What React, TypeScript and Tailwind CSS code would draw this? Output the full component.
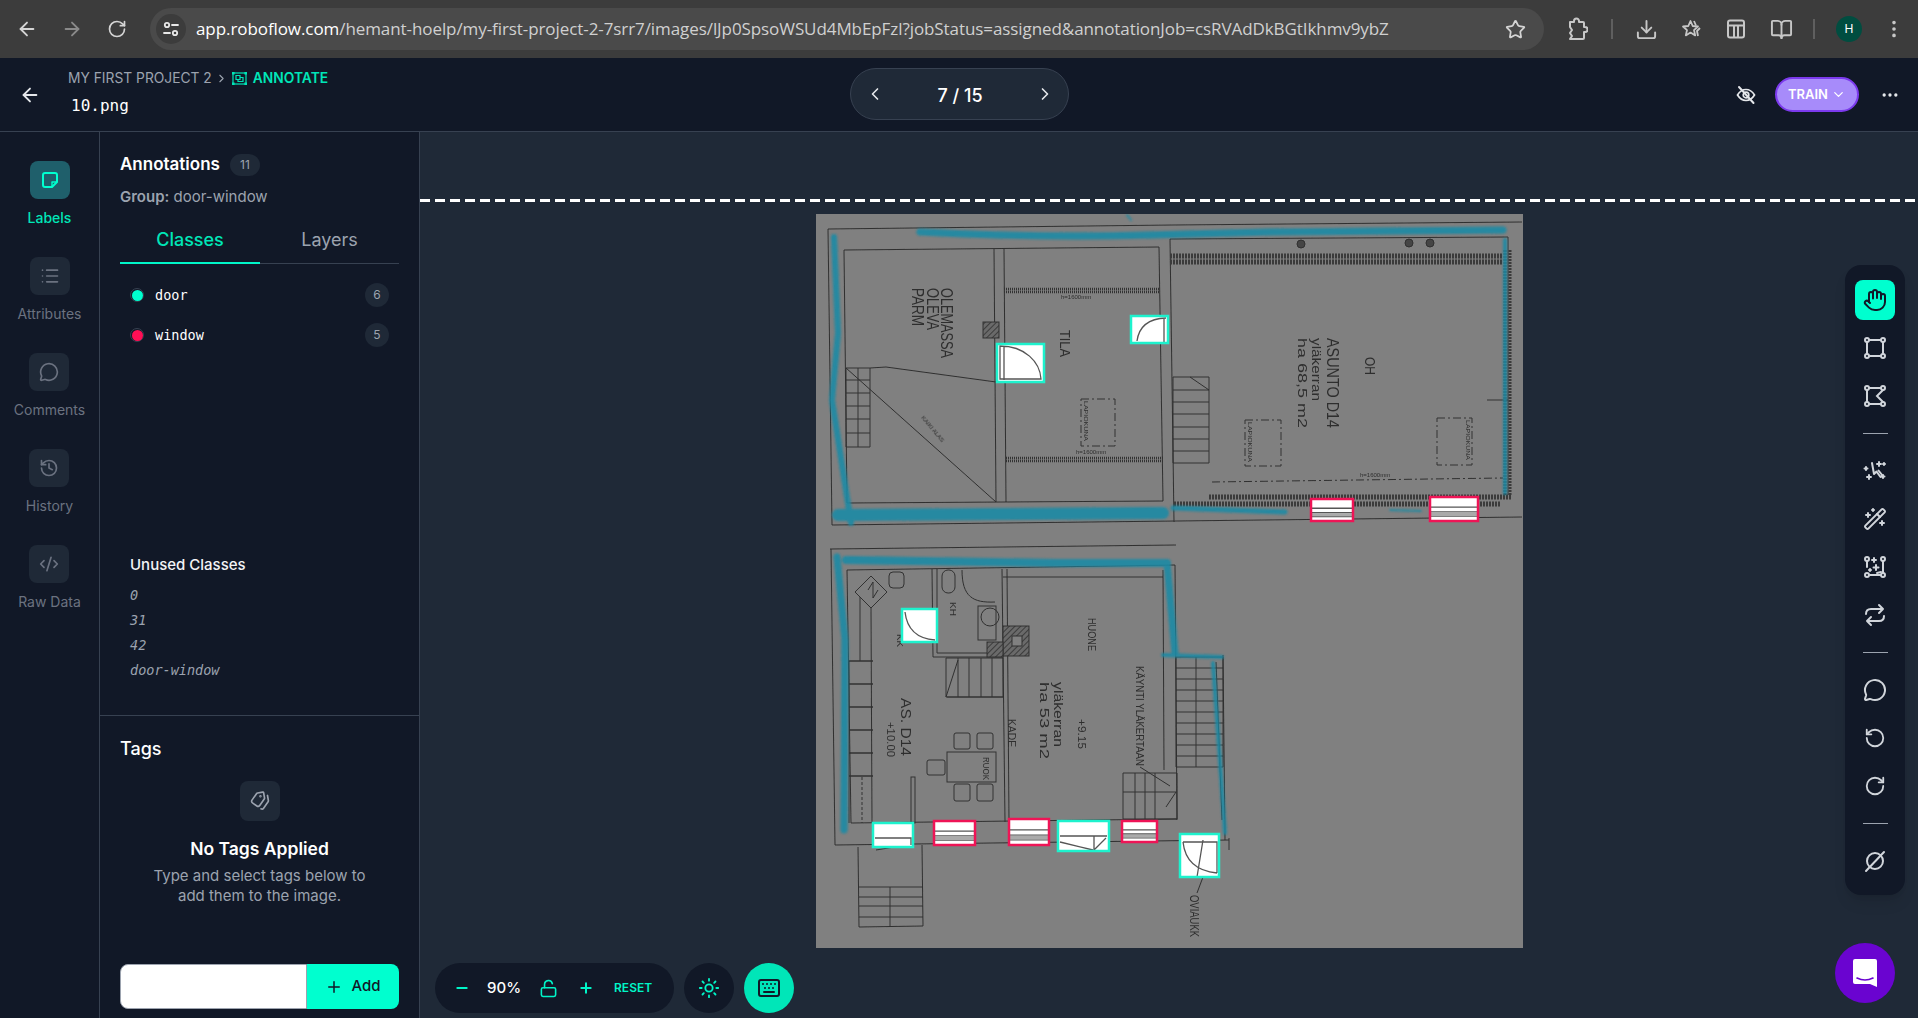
import {
  ArrowLeft,
  ArrowRight,
  BookOpen,
  ChevronDown,
  ChevronLeft,
  ChevronRight,
  CodeXml,
  Download,
  Ellipsis,
  EllipsisVertical,
  Hand,
  History,
  Keyboard,
  List,
  LockOpen,
  MessageCircle,
  Minus,
  Plus,
  RotateCcw,
  RotateCw,
  Star,
  Sun,
  Tags,
  WandSparkles,
} from "lucide-react"
import type { ReactNode } from "react"

const url = "/hemant-hoelp/my-first-project-2-7srr7/images/lJp0SpsoWSUd4MbEpFzl?jobStatus=assigned&annotationJob=csRVAdDkBGtIkhmv9ybZ"

function NoteIcon() {
  return (
    <svg width="20" height="20" viewBox="0 0 20 20" fill="none" stroke="currentColor" strokeWidth="2" strokeLinejoin="round">
      <path d="M5 3h10a2 2 0 0 1 2 2v7l-5 5H5a2 2 0 0 1-2-2V5a2 2 0 0 1 2-2z" />
      <path d="M17 12h-5v5" strokeWidth="1.400" />
    </svg>
  )
}

const navItems = [
  { label: "Labels", icon: <NoteIcon />, active: true },
  { label: "Attributes", icon: <List size={20} /> },
  { label: "Comments", icon: <MessageCircle size={20} /> },
  { label: "History", icon: <History size={20} /> },
  { label: "Raw Data", icon: <CodeXml size={20} /> },
]

const classes = [
  { name: "door", count: 6, dot: "bg-[#00ffcf]" },
  { name: "window", count: 5, dot: "bg-[#ff0f55]" },
]

const unused = ["0", "31", "42", "door-window"]

function Corners({ notch }: { notch?: boolean }) {
  return (
    <svg width="24" height="24" viewBox="0 0 24 24" fill="none" stroke="currentColor" strokeWidth="2" strokeLinecap="round">
      <circle cx="4" cy="4" r="2" />
      <circle cx="20" cy="4" r="2" />
      <circle cx="4" cy="20" r="2" />
      <circle cx="20" cy="20" r="2" />
      <path d="M6 4h12M4 6v12M6 20h12" />
      {notch ? <path d="M20 6l-6 6 6 6" /> : <path d="M20 6v12" />}
    </svg>
  )
}

function SmartSelect() {
  return (
    <svg width="24" height="24" viewBox="0 0 24 24" fill="none" stroke="currentColor" strokeWidth="2" strokeLinecap="round" strokeLinejoin="round">
      <path d="M9 4l2 11 2.500-2.500 4 5.500 2-1.500-4-5" />
      <path d="M16 3v4M14 5h4M21 4v2M20 5h2M3 8v3M1.500 9.500h3M6 16v4M4 18h4M20 16v3M18.500 17.500h3" />
    </svg>
  )
}

function AutoLabel() {
  return (
    <svg width="24" height="24" viewBox="0 0 24 24" fill="none" stroke="currentColor" strokeWidth="2" strokeLinecap="round">
      <circle cx="4" cy="4" r="2" />
      <circle cx="20" cy="4" r="2" />
      <circle cx="4" cy="20" r="2" />
      <circle cx="20" cy="20" r="2" />
      <path d="M4 6v6M20 6v12M7 20h11M14 18l4-1" />
      <path d="M11 3v4M9 5h4M13 10v5M10.500 12.500h5M7 14v2M6 15h2" />
    </svg>
  )
}

function SwapIcon() {
  return (
    <svg width="24" height="24" viewBox="0 0 24 24" fill="none" stroke="currentColor" strokeWidth="2" strokeLinecap="round" strokeLinejoin="round">
      <path d="M3 11c0-3 2-5 5-5h12M16 2l4 4-4 4" />
      <path d="M21 13c0 3-2 5-5 5H4M8 14l-4 4 4 4" />
    </svg>
  )
}

function NullIcon() {
  return (
    <svg width="24" height="24" viewBox="0 0 24 24" fill="none" stroke="currentColor" strokeWidth="2" strokeLinecap="round">
      <circle cx="12" cy="12" r="8" />
      <path d="M3 22L21 3" />
    </svg>
  )
}

function SiteInfo() {
  return (
    <svg width="18" height="18" viewBox="0 0 18 18" fill="none" stroke="#e8e8e8" strokeWidth="1.800" strokeLinecap="round">
      <circle cx="5" cy="5" r="2.200" />
      <path d="M10 5h6M2 13h6" />
      <circle cx="13" cy="13" r="2.200" />
    </svg>
  )
}

function ExtensionIcon() {
  return (
    <svg width="22" height="24" viewBox="0 0 22 24" fill="none" stroke="#c7c7c7" strokeWidth="2" strokeLinejoin="round">
      <path d="M4 5h4V4a2.500 2.500 0 0 1 5 0v1h4a1 1 0 0 1 1 1v4h1a2.500 2.500 0 0 1 0 5h-1v6a1 1 0 0 1-1 1H4l2-3-2-3 2-3-2-3z" />
    </svg>
  )
}

function StarBadge() {
  return (
    <svg width="22" height="22" viewBox="0 0 22 22" fill="none" stroke="#c7c7c7" strokeWidth="1.800" strokeLinejoin="round">
      <path d="M9.500 3l2.200 5 5.300.5-4 3.600 1.200 5.300-4.700-2.800-4.700 2.800 1.200-5.300-4-3.600 5.300-.5z" />
      <path d="M13 3l2 4.500M19 10l-3 3 1 5" />
    </svg>
  )
}

function LayoutBox() {
  return (
    <svg width="20" height="22" viewBox="0 0 20 22" fill="none" stroke="#c7c7c7" strokeWidth="2">
      <rect x="2" y="2.500" width="16" height="17" rx="2" />
      <path d="M2 7.500h16M8 7.500v12M12 7.500v12" />
    </svg>
  )
}

function AnnotateIcon() {
  return (
    <svg width="15" height="13" viewBox="0 0 15 13" fill="none" stroke="#00e6b8" strokeWidth="1.200">
      <rect x="1" y="1" width="13" height="11" />
      <path d="M4 3.500h4v4H4zM8 5.500h3v4H6V7.500" />
      <path d="M0 0h2v2H0zM13 0h2v2h-2zM0 11h2v2H0zM13 11h2v2h-2z" fill="#00e6b8" />
    </svg>
  )
}

function HiddenEye() {
  return (
    <svg width="20" height="20" viewBox="0 0 20 20" fill="none" stroke="#e5e7eb" strokeWidth="1.700" strokeLinecap="round">
      <path d="M1.500 10C4 6 7 4.500 10 4.500S16 6 18.500 10C16 14 13 15.500 10 15.500S4 14 1.500 10z" />
      <circle cx="10" cy="10" r="2.800" />
      <path d="M3 2l14.500 16" strokeWidth="2" />
    </svg>
  )
}

function ChatBubble() {
  return (
    <svg width="26" height="30" viewBox="0 0 26 30">
      <path d="M3 1h20a2 2 0 0 1 2 2v26l-7-3H3a2 2 0 0 1-2-2V3a2 2 0 0 1 2-2z" fill="#fff" />
      <path d="M5 20q8 4 16 0" fill="none" stroke="#6a04d0" strokeWidth="1.600" strokeLinecap="round" />
    </svg>
  )
}

function ToolDivider() {
  return (
    <div className="h-[27px] flex items-center justify-center">
      <div className="w-[25px] h-px bg-[#9ca3af]" />
    </div>
  )
}

function Tool({ children, active }: { children: ReactNode; active?: boolean }) {
  return (
    <div className="h-12 flex items-center justify-center">
      <div className={`size-10 rounded-lg flex items-center justify-center ${active ? "bg-[#00ffcf] text-[#111827]" : "text-[#d1d5db]"}`}>
        {children}
      </div>
    </div>
  )
}

// stripes of a window symbol, used for the pink boxes
function WindowBox({ x, y, w, h }: { x: number; y: number; w: number; h: number }) {
  return (
    <g>
      <rect x={x} y={y} width={w} height={h} fill="#fff" />
      <path
        d={`M${x} ${y + h * 0.42}H${x + w}M${x} ${y + h * 0.62}H${x + w}M${x} ${y + h * 0.8}H${x + w}`}
        stroke="#555"
        strokeWidth="1.300"
      />
      <rect x={x} y={y + h * 0.64} width={w} height={h * 0.15} fill="#aaa" />
      <rect x={x} y={y} width={w} height={h} fill="none" stroke="#ee1456" strokeWidth="2.500" />
    </g>
  )
}

function DoorBox({ x, y, w, h, d }: { x: number; y: number; w: number; h: number; d: string }) {
  return (
    <g>
      <rect x={x} y={y} width={w} height={h} fill="#fff" />
      <path d={d} fill="none" stroke="#555" strokeWidth="1.300" />
      <rect x={x} y={y} width={w} height={h} fill="none" stroke="#1df2cd" strokeWidth="2.500" />
    </g>
  )
}

function Rotated({ x, y, size, len, children }: { x: number; y: number; size: number; len: number; children: string }) {
  return (
    <text
      transform={`translate(${x} ${y}) rotate(90)`}
      fontSize={size}
      textLength={len}
      lengthAdjust="spacingAndGlyphs"
      fontFamily="Liberation Sans, sans-serif"
      fill="#2e2e2e"
    >
      {children}
    </text>
  )
}

function FloorPlan() {
  return (
    <svg width="707" height="734" viewBox="816 214 707 734" className="block">
      <defs>
        <filter id="soft">
          <feGaussianBlur stdDeviation="0.450" />
        </filter>
        <filter id="marker" x="-10%" y="-10%" width="120%" height="120%">
          <feGaussianBlur stdDeviation="1" />
        </filter>
        <pattern id="hatch" width="4" height="4" patternUnits="userSpaceOnUse" patternTransform="rotate(45)">
          <rect width="4" height="4" fill="#6a6a6a" />
          <path d="M0 0V4" stroke="#2e2e2e" strokeWidth="1.500" />
        </pattern>
      </defs>
      <rect x="816" y="214" width="707" height="734" fill="#808080" />
      <g filter="url(#soft)" fill="none" stroke="#303030" strokeWidth="1">
        {/* upper floor */}
        <path d="M828 229L1173 225L1522 222M828 229L832 525L1522 517" />
        <path d="M844 250L1159 247L1163 501L847 503ZM994 249L996 502M1004 249L1006 502" />
        <path d="M1170 239L1508 237M1170 239L1174 522M1508 237V495" />
        <path d="M1004 289H1160M1004 292H1160M1006 458H1163M1006 461H1163" strokeWidth="2.500" strokeDasharray="1 1" />
        <rect x="983" y="322" width="16" height="16" fill="url(#hatch)" />
        <path d="M846 368H870V447H846ZM846 380H870M846 393H870M846 406H870M846 419H870M846 433H870M858 368V447" />
        <path d="M846 368L996 502M870 368L886 367L996 382" />
        <path d="M1081 399H1115V446H1081ZM1245 420H1281V466H1245ZM1437 418H1472V465H1437ZM1212 482L1503 478" strokeDasharray="8 3 2 3" />
        <path d="M1173 377H1209V463H1173ZM1173 390H1209M1173 402H1209M1173 414H1209M1173 427H1209M1173 439H1209M1173 451H1209M1190 377L1209 390" />
        <path d="M1170 256H1503M1170 262H1503" strokeWidth="5" stroke="#3a3a3a" strokeDasharray="2 1" />
        <path d="M1505 250V495M1510 250V495" strokeWidth="3" stroke="#3a3a3a" strokeDasharray="2 1" />
        <path d="M1209 497H1512M1174 504H1500" strokeWidth="5" stroke="#3a3a3a" strokeDasharray="2 1" />
        <path d="M1487 400H1508" />
        <path d="M830 549L1176 545" />
        <ellipse cx="1301" cy="244" rx="4" ry="4" fill="#444" />
        <ellipse cx="1409" cy="243" rx="4" ry="4" fill="#444" />
        <ellipse cx="1430" cy="243" rx="4" ry="4" fill="#444" />
        {/* lower floor */}
        <path d="M831 549L835 845L1229 840M847 570L1175 565L1177 820M847 570L851 823L1177 819M1163 570L1164 770" />
        <path d="M932 569L933 657H1003M937 569V653H1003M1002 569L1005 822M1007 569L1009 822M1003 577H1163M947 697H1003" />
        <path d="M860 597V661M871 607L872 823M849 661V823" />
        <path d="M849 661H873M849 684H873M849 707H873M849 730H873M849 753H873M849 776H873" strokeWidth="1.600" />
        <path d="M871 576L887 592L871 608L855 592ZM868 590L873 582V598L878 590" />
        <rect x="889" y="572" width="15" height="16" rx="4" />
        <rect x="942" y="570" width="13" height="23" rx="6" />
        <path d="M962 570C962 597 973 603 995 602" />
        <rect x="978" y="606" width="18" height="34" />
        <circle cx="990" cy="617" r="9" />
        <rect x="1003" y="626" width="26" height="30" fill="url(#hatch)" />
        <rect x="987" y="642" width="16" height="15" fill="url(#hatch)" />
        <rect x="1012" y="636" width="10" height="10" fill="#808080" />
        <path d="M946 658H1003V697H946ZM958 658V697M969 658V697M981 658V697M992 658V697M946 697L958 660" />
        <rect x="947" y="752" width="49" height="30" />
        <rect x="954" y="733" width="16" height="16" rx="2" />
        <rect x="977" y="733" width="16" height="16" rx="2" />
        <rect x="927" y="760" width="18" height="15" rx="2" />
        <rect x="954" y="784" width="16" height="17" rx="2" />
        <rect x="977" y="784" width="16" height="17" rx="2" />
        <rect x="911" y="777" width="4" height="46" />
        <path d="M862 777V823" strokeDasharray="3 2" />
        <path d="M1176 657H1223V767H1176ZM1196 657V767M1176 668H1223M1176 679H1223M1176 690H1223M1176 701H1223M1176 712H1223M1176 723H1223M1176 734H1223M1176 745H1223M1176 756H1223" />
        <path d="M1223 655L1225 840M1216 662L1222 820" />
        <path d="M1123 773H1177V819H1123ZM1135 773V819M1145 773V819M1155 773V819M1123 792H1177M1140 767L1170 786M1166 807L1176 792" />
        <path d="M858 847L859 927L923 926L922 845M859 887H923M859 897H923M859 906H923M859 917H923M890 887V927M876 850L900 846" />
        <path d="M1229 838V850M1203 877L1197 893" />
      </g>
      <g filter="url(#soft)">
        <Rotated x={941} y={288} size={16} len={70}>OLEMASSA</Rotated>
        <Rotated x={927} y={288} size={16} len={42}>OLEVA</Rotated>
        <Rotated x={912} y={288} size={16} len={38}>PARM</Rotated>
        <Rotated x={1060} y={330} size={15} len={27}>TILA</Rotated>
        <Rotated x={1365} y={357} size={15} len={18}>OH</Rotated>
        <Rotated x={1327} y={338} size={16} len={90}>ASUNTO D14</Rotated>
        <Rotated x={1312} y={338} size={13} len={63}>yläkerran</Rotated>
        <Rotated x={1298} y={338} size={13} len={90}>ha 68,5 m2</Rotated>
        <Rotated x={1084} y={401} size={6} len={40}>LAPIOKUNA</Rotated>
        <Rotated x={1248} y={422} size={6} len={40}>LAPIOKUNA</Rotated>
        <Rotated x={1466} y={420} size={6} len={40}>LAPIOKUNA</Rotated>
        <Rotated x={950} y={602} size={9} len={14}>KH</Rotated>
        <Rotated x={897} y={634} size={9} len={13}>KK</Rotated>
        <Rotated x={901} y={698} size={15} len={58}>AS. D14</Rotated>
        <Rotated x={887} y={722} size={10} len={35}>+10.00</Rotated>
        <Rotated x={983} y={757} size={9} len={23}>RUOK</Rotated>
        <Rotated x={1008} y={719} size={10} len={28}>KADE</Rotated>
        <Rotated x={1054} y={682} size={13} len={65}>yläkerran</Rotated>
        <Rotated x={1040} y={682} size={13} len={77}>ha 53 m2</Rotated>
        <Rotated x={1078} y={719} size={10} len={30}>+9.15</Rotated>
        <Rotated x={1088} y={618} size={10} len={33}>HUONE</Rotated>
        <Rotated x={1136} y={666} size={10} len={100}>KÄYNTI YLÄKERTAAN</Rotated>
        <Rotated x={1190} y={895} size={12} len={42}>OVIAUKK</Rotated>
        <text x="1061" y="299" fontSize="6" fontFamily="Liberation Sans, sans-serif" fill="#2e2e2e">h=1600mm</text>
        <text x="1076" y="454" fontSize="6" fontFamily="Liberation Sans, sans-serif" fill="#2e2e2e">h=1600mm</text>
        <text x="1360" y="477" fontSize="6" fontFamily="Liberation Sans, sans-serif" fill="#2e2e2e">h=1600mm</text>
        <text transform="translate(921 418) rotate(50)" fontSize="6" fontFamily="Liberation Sans, sans-serif" fill="#2e2e2e">KAIKI ALAS</text>
      </g>
      <g filter="url(#marker)" fill="none" stroke="#1a8aa5" strokeLinecap="round" strokeLinejoin="round" opacity="0.9">
        <path d="M920 232Q1040 238 1150 235T1269 232T1503 230" strokeWidth="7" />
        <path d="M834 237L838 333L832 400L851 523" strokeWidth="6" />
        <path d="M838 515L1163 513" strokeWidth="12" />
        <path d="M1173 508L1285 512" strokeWidth="5" />
        <path d="M1505 240V493" strokeWidth="4" />
        <path d="M1127 215L1131 220M1390 510L1421 511" strokeWidth="2" />
        <path d="M837 557L845 640L844 830" strokeWidth="7" />
        <path d="M846 560L1057 563L1167 563" strokeWidth="8" />
        <path d="M1167 563L1175 653" strokeWidth="7" />
        <path d="M1163 655L1222 657" strokeWidth="4" />
        <path d="M1213 663L1225 833" strokeWidth="4" />
      </g>
      <DoorBox x={997} y={344} w={47} h={38} d="M1000 346C1025 346 1040 362 1041 379H1000ZM1004 346V380" />
      <DoorBox x={1131} y={316} w={37} h={27} d="M1137 341Q1140 319 1166 318M1164 318V342" />
      <DoorBox x={902} y={609} w={35} h={33} d="M905 612Q908 638 935 640" />
      <DoorBox x={873} y={823} w={40} h={24} d="M875 838H911V845" />
      <DoorBox x={1058} y={821} w={51} h={30} d="M1060 836H1107M1060 842L1093 850M1094 836V850M1094 850L1106 838" />
      <DoorBox x={1180} y={834} w={39} h={43} d="M1183 842H1217V873M1183 842Q1186 870 1217 873M1203 840L1197 877" />
      <WindowBox x={1311} y={499} w={42} h={22} />
      <WindowBox x={1430} y={497} w={48} h={24} />
      <WindowBox x={934} y={821} w={41} h={24} />
      <WindowBox x={1009} y={819} w={40} h={26} />
      <WindowBox x={1122} y={821} w={35} h={21} />
    </svg>
  )
}

export default function App() {
  return (
    <div className="h-screen w-full flex flex-col overflow-hidden bg-[#111827] text-white [font-family:Inter,sans-serif]">
      {/* browser chrome */}
      <div className="h-[58px] shrink-0 bg-[#3c3c3c] flex items-center pl-[16px] text-[#c7c7c7]">
        <ArrowLeft size={22} className="text-[#d5d5d5]" />
        <ArrowRight size={22} className="ml-[23px] text-[#8a8a8a]" />
        <RotateCw size={20} className="ml-[24px] text-[#d5d5d5]" />
        <div className="ml-[23px] w-[1394px] h-[42px] rounded-full bg-[#4a4a4a] flex items-center pl-[6px] pr-[18px]">
          <div className="size-[30px] rounded-full bg-[#3c3c3c] flex items-center justify-center">
            <SiteInfo />
          </div>
          <div className="ml-[10px] flex-1 whitespace-nowrap text-[17px] [font-family:'Open_Sans',sans-serif] tracking-[-0.08px]">
            <span className="text-white">app.roboflow.com</span>
            <span className="text-[#d0d0d0]">{url}</span>
          </div>
          <Star size={21} className="text-[#d5d5d5]" />
        </div>
        <div className="ml-[22px]"><ExtensionIcon /></div>
        <div className="ml-[23px] w-[2px] h-[20px] bg-[#5f5f5f]" />
        <Download size={23} className="ml-[22px]" />
        <div className="ml-[23px]"><StarBadge /></div>
        <div className="ml-[23px]"><LayoutBox /></div>
        <BookOpen size={23} className="ml-[24px]" />
        <div className="ml-[20px] w-[2px] h-[20px] bg-[#5f5f5f]" />
        <div className="ml-[21px] size-[26px] rounded-full bg-[#004d40] text-white text-[12px] flex items-center justify-center">H</div>
        <EllipsisVertical size={22} className="ml-[21px]" />
      </div>

      {/* header */}
      <div className="h-[74px] shrink-0 border-b border-[#374151] flex items-center justify-between pl-[19px] pr-[18px] relative">
        <div className="flex items-center">
          <ArrowLeft size={22} className="text-[#e5e7eb]" />
          <div className="ml-[27px] mb-[5px]">
            <div className="flex items-center text-[13.800px] h-[20px]">
              <span className="text-[#9ca3af]">MY FIRST PROJECT 2</span>
              <ChevronRight size={13} className="ml-[3px] text-[#9ca3af]" />
              <span className="ml-[4px]"><AnnotateIcon /></span>
              <span className="ml-[6px] font-semibold text-[#00e6b8]">ANNOTATE</span>
            </div>
            <div className="mt-[7px] ml-[3px] text-[16px] leading-[20px] [font-family:'DejaVu_Sans_Mono',monospace] text-white">10.png</div>
          </div>
        </div>
        <div className="absolute left-[850px] top-[10px] w-[219px] h-[52px] rounded-full bg-[#1f2937] border border-[#374151] flex items-center justify-between pl-[14px] pr-[13px]">
          <ChevronLeft size={20} className="text-[#e5e7eb]" />
          <span className="text-[18px] font-medium pt-[2px]">7 / 15</span>
          <ChevronRight size={20} className="text-[#e5e7eb]" />
        </div>
        <div className="flex items-center">
          <HiddenEye />
          <div className="ml-[19px] w-[84px] h-[35px] rounded-full bg-[#a78bfa] border-2 border-[#7c3aed] flex items-center justify-center gap-[3px] text-[13px] font-semibold">
            TRAIN
            <ChevronDown size={15} />
          </div>
          <Ellipsis size={20} className="ml-[21px] text-[#e5e7eb]" />
        </div>
      </div>

      <div className="flex-1 flex min-h-0">
        {/* left nav */}
        <div className="w-[100px] shrink-0 border-r border-[#374151] pt-[29px] flex flex-col items-center gap-[30px]">
          {navItems.map((item) => (
            <div key={item.label} className="h-[66px] flex flex-col items-center">
              <div className={`size-10 rounded-lg flex items-center justify-center ${item.active ? "bg-[#1f5f6b] text-[#00ffcf]" : "bg-[#1f2937] text-[#6b7280]"}`}>
                {item.icon}
              </div>
              <div className={`mt-[10px] text-[14px] leading-[18px] ${item.active ? "text-[#00e6b8] font-medium" : "text-[#6b7280]"}`}>{item.label}</div>
            </div>
          ))}
        </div>

        {/* annotations panel */}
        <div className="w-[320px] shrink-0 border-r border-[#374151] flex flex-col">
          <div className="h-[584px] border-b border-[#374151] px-[20px] pt-[21px]">
            <div className="flex items-center h-[24px]">
              <span className="text-[17px] font-semibold">Annotations</span>
              <span className="ml-[10px] w-[30px] h-[22px] rounded-full bg-[#1f2937] text-[#9ca3af] text-[12px] flex items-center justify-center">11</span>
            </div>
            <div className="mt-[10px] text-[15px] leading-[20px] text-[#9ca3af]">
              <span className="font-semibold">Group:</span> door-window
            </div>
            <div className="mt-[11px] flex border-b border-[#374151] h-[46px]">
              <div className="w-[140px] h-[46px] border-b-2 border-[#00f5c8] text-[#00e6b8] text-[18px] font-medium text-center pt-[8px]">Classes</div>
              <div className="flex-1 text-[#9ca3af] text-[18px] text-center pt-[8px]">Layers</div>
            </div>
            <div className="mt-[11px] h-[280px]">
              {classes.map((c) => (
                <div key={c.name} className="h-[40px] flex items-center pl-[10px] pr-[10px]">
                  <span className="size-[14px] rounded-full border border-[#374151] flex items-center justify-center">
                    <span className={`size-[11px] rounded-full ${c.dot}`} />
                  </span>
                  <span className="ml-[11px] flex-1 text-[13.500px] [font-family:'DejaVu_Sans_Mono',monospace]">{c.name}</span>
                  <span className="size-[24px] rounded-full bg-[#1f2937] text-[#9ca3af] text-[12px] flex items-center justify-center">{c.count}</span>
                </div>
              ))}
            </div>
            <div className="pl-[10px]">
              <div className="text-[15px] leading-[20px] font-medium text-[#f3f4f6]">Unused Classes</div>
              <div className="mt-[8px]">
                {unused.map((name) => (
                  <div key={name} className="h-[25px] leading-[25px] italic text-[13.500px] text-[#9ca3af] [font-family:'DejaVu_Sans_Mono',monospace]">{name}</div>
                ))}
              </div>
            </div>
          </div>
          <div className="flex-1 px-[20px] pt-[20px] flex flex-col items-center">
            <div className="self-start text-[18px] leading-[26px] font-medium">Tags</div>
            <div className="mt-[19px] w-[40px] h-[40px] rounded-lg bg-[#1f2937] flex items-center justify-center text-[#9ca3af]">
              <Tags size={20} className="-scale-x-100 rotate-[-10deg]" />
            </div>
            <div className="mt-[15px] text-[17.500px] leading-[26px] font-semibold">No Tags Applied</div>
            <div className="mt-[4px] text-[15px] leading-[20px] text-[#9ca3af] text-center">
              Type and select tags below to
              <br />
              add them to the image.
            </div>
            <div className="mt-[58px] w-full h-[45px] flex">
              <div className="w-[187px] rounded-l-lg bg-white border border-[#9ca3af]" />
              <div className="flex-1 rounded-r-lg bg-[#00ffcf] text-[#111827] flex items-center justify-center gap-[8px] text-[15px] font-medium">
                <Plus size={18} />
                Add
              </div>
            </div>
          </div>
        </div>

        {/* canvas */}
        <div className="flex-1 relative bg-[#1f2937] min-w-0">
          <div className="absolute left-0 right-0 top-[67px] h-[3px] bg-[repeating-linear-gradient(90deg,#fff_0,#fff_10px,transparent_10px,transparent_15px)]" />
          <div className="absolute left-[396px] top-[82px]">
            <FloorPlan />
          </div>

          {/* bottom controls */}
          <div className="absolute left-[15px] top-[831px] flex gap-[10px]">
            <div className="w-[239px] h-[50px] rounded-full bg-[#111827] flex items-center pl-[19px] text-[#00f5c8]">
              <Minus size={16} strokeWidth={3} />
              <span className="ml-[17px] text-[15px] font-medium text-white">90%</span>
              <LockOpen size={19} className="ml-[18px]" />
              <Plus size={16} strokeWidth={3} className="ml-[20px]" />
              <span className="ml-[20px] text-[12px] font-semibold">RESET</span>
            </div>
            <div className="size-[50px] rounded-full bg-[#111827] flex items-center justify-center text-[#00f5c8]">
              <Sun size={22} />
            </div>
            <div className="size-[50px] rounded-full bg-[#00e6b8] flex items-center justify-center text-[#111827]">
              <Keyboard size={24} />
            </div>
          </div>

          {/* right toolbar */}
          <div className="absolute right-[13px] top-[133px] w-[60px] rounded-[16px] bg-[#111827] pt-[11px] pb-[10px] shadow-lg">
            <Tool active><Hand size={24} /></Tool>
            <Tool><Corners /></Tool>
            <Tool><Corners notch /></Tool>
            <ToolDivider />
            <Tool><SmartSelect /></Tool>
            <Tool><WandSparkles size={24} /></Tool>
            <Tool><AutoLabel /></Tool>
            <Tool><SwapIcon /></Tool>
            <ToolDivider />
            <Tool><MessageCircle size={24} /></Tool>
            <Tool><RotateCcw size={22} /></Tool>
            <Tool><RotateCw size={22} /></Tool>
            <ToolDivider />
            <Tool><NullIcon /></Tool>
          </div>

          <div className="absolute right-[23px] top-[811px] size-[60px] rounded-full bg-[#6a04d0] flex items-center justify-center">
            <ChatBubble />
          </div>
        </div>
      </div>
    </div>
  )
}
